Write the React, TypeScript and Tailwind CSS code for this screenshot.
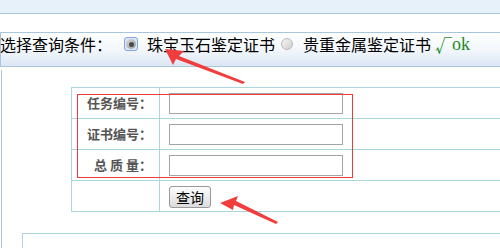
export default function App() {
  const cjk = { fontFamily: '"Noto Sans CJK SC", "Noto Sans", sans-serif' };
  return (
    <div className="relative w-[500px] h-[248px] overflow-hidden bg-white text-black" style={cjk}>
      {/* top band */}
      <div className="h-[14px] bg-[#e6f1fa] border-b border-[#a9c6dc]" />

      {/* query condition bar */}
      <div className="mt-[18px] h-[35px] border-y border-l border-[#a9c6dc] bg-gradient-to-b from-[#ffffff] via-[#f3f7fc] to-[#dbe7f4]">
        <div className="flex items-center h-[20px] mt-[1px] text-[16px] leading-none whitespace-nowrap">
          <span className="-ml-[1px]">选择查询条件：</span>
          <span className="ml-[12px] w-[14px] h-[14px] rounded-[3px] border border-[#7fa7e0] bg-[#dbe6f6] flex items-center justify-center">
            <span className="w-[10px] h-[10px] rounded-full bg-gradient-to-br from-[#d8d8d8] to-[#9a9a9a] flex items-center justify-center">
              <span className="w-[5px] h-[5px] rounded-full bg-[#4a4a4a]" />
            </span>
          </span>
          <span className="ml-[9px]">珠宝玉石鉴定证书</span>
          <span className="ml-[6px] w-[12px] h-[12px] rounded-full border border-[#b8b8b8] bg-gradient-to-br from-[#f6f6f6] to-[#cfcfcf]" />
          <span className="ml-[10px]">贵重金属鉴定证书</span>
          <span className="ml-[4px] text-[#1e8a1e] text-[17px]">√</span>
          <span className="text-[#1e8a1e] text-[18px]" style={{ fontFamily: '"Liberation Serif", serif' }}>ok</span>
        </div>
      </div>

      {/* content */}
      <div className="mt-[3px] ml-[1px] h-[200px] border-l border-[#a9c6d8] pt-[17px]">
        <table className="ml-[69px] w-[440px] border-collapse">
          <tbody>
            {["任务编号：", "证书编号：", "总 质 量："].map((label) => (
              <tr key={label} className="h-[31px]">
                <td className="w-[88px] border border-[#abd6dc] text-right pr-[7px] text-[13px] font-bold text-[#555555] whitespace-pre">
                  {label}
                </td>
                <td className="border border-[#abd6dc] pl-[9px]">
                  <div className="w-[174px] h-[21px] border border-[#a5a5a5] bg-white" />
                </td>
              </tr>
            ))}
            <tr className="h-[31px]">
              <td className="border border-[#abd6dc]" />
              <td className="border border-[#abd6dc] pl-[9px]">
                <button className="w-[42px] h-[22px] rounded-[3px] border border-[#9a9a9a] bg-gradient-to-b from-[#fdfdfd] to-[#dcdcdc] text-[14px] leading-none">
                  查询
                </button>
              </td>
            </tr>
          </tbody>
        </table>

        <div className="mt-[21px] ml-[20px] h-[40px] border-t border-l border-[#abd6dc]" />
      </div>

      {/* red annotation box */}
      <div className="absolute left-[77px] top-[94px] w-[276px] h-[84px] border-[1.5px] border-[#f03a3a]" />

      {/* red arrows */}
      <svg className="absolute left-0 top-0" width="500" height="248">
        <polygon points="165,49 184,51 179,56 245,82 243,84 176,59 173,65" fill="#f23d3d" />
        <polygon points="220,203 238,196 236,201 278,222 276,224 234,205 233,210" fill="#f23d3d" />
      </svg>
    </div>
  );
}
